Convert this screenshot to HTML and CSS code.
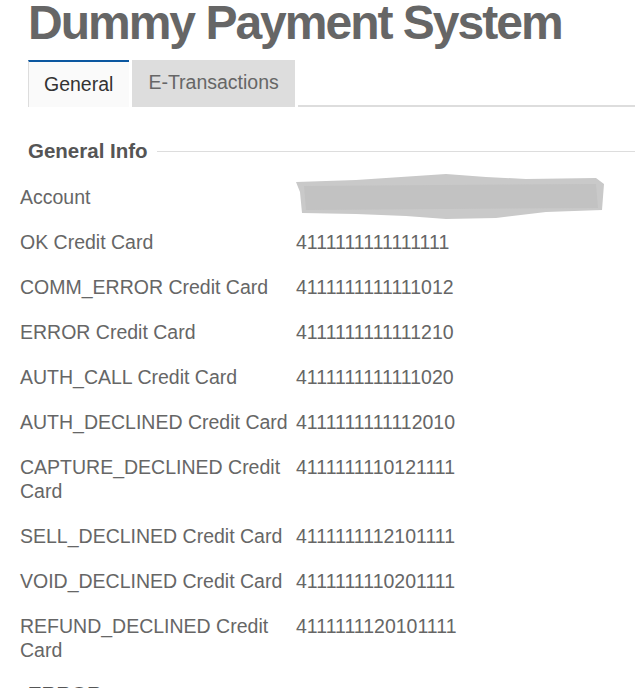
FILE: index.html
```html
<!DOCTYPE html>
<html lang="en">
<head>
<meta charset="UTF-8">
<meta name="viewport" content="width=device-width, initial-scale=1.0">
<title>Dummy Payment System</title>
<link rel="stylesheet" href="styles.css">
</head>
<body>
<div class="page">
  <h1 class="title">Dummy Payment System</h1>

  <div class="tabs">
    <div class="tab active">General</div>
    <div class="tab">E-Transactions</div>
    <div class="tab-rest"></div>
  </div>

  <div class="section">
    <div class="legend"><span>General Info</span><span class="rule"></span></div>
    <div class="info">
      <div class="label">Account</div>
      <div class="value">
        <svg class="redact" width="310" height="50" viewBox="0 0 310 50">
          <path d="M0 10 L60 8 L120 4 L150 2 L190 5 L230 7 L300 6 L308 12 L306 38 L250 40 L200 46 L150 47 L110 44 L60 42 L6 41 L4 20 Z" fill="#c9c9c9"/>
          <path d="M8 14 L300 12 L302 36 L10 38 Z" fill="#c2c2c2"/>
        </svg>
      </div>

      <div class="label">OK Credit Card</div>
      <div class="value">4111111111111111</div>

      <div class="label">COMM_ERROR Credit Card</div>
      <div class="value">4111111111111012</div>

      <div class="label">ERROR Credit Card</div>
      <div class="value">4111111111111210</div>

      <div class="label">AUTH_CALL Credit Card</div>
      <div class="value">4111111111111020</div>

      <div class="label">AUTH_DECLINED Credit Card</div>
      <div class="value">4111111111112010</div>

      <div class="label">CAPTURE_DECLINED Credit Card</div>
      <div class="value">4111111110121111</div>

      <div class="label">SELL_DECLINED Credit Card</div>
      <div class="value">4111111112101111</div>

      <div class="label">VOID_DECLINED Credit Card</div>
      <div class="value">4111111110201111</div>

      <div class="label">REFUND_DECLINED Credit Card</div>
      <div class="value">4111111120101111</div>
    </div>
  </div>

  <div class="section last">
    <div class="legend"><span>ERROR</span><span class="rule"></span></div>
  </div>
</div>
</body>
</html>
```

FILE: styles.css
```css
body {
  font-family: 'Liberation Sans', Arial, sans-serif;
  background: #fff;
  margin: 0;
  color: #666;
}
.page {
  padding: 0 0 0 20px;
}
.title {
  margin: 0 0 0 8px;
  font-size: 48px;
  line-height: 46px;
  font-weight: bold;
  letter-spacing: -2px;
  color: #666;
}
.tabs {
  display: flex;
  margin: 14px 0 0 8px;
  height: 47px;
}
.tab {
  padding: 0 16px;
  font-size: 19.5px;
  line-height: 45px;
  color: #666;
  background: #ddd;
  margin-right: 3px;
}
.tab.active {
  background: #fafafa;
  color: #333;
  border-top: 2px solid #0b57a0;
  border-left: 1px solid #ddd;
  padding: 0 16px 0 15px;
}
.tab-rest {
  flex: 1;
  border-bottom: 2px solid #ddd;
}
.section {
  margin-top: 32px;
}
.section.last {
  margin-top: 9px;
}
.legend {
  display: flex;
  align-items: center;
  gap: 9px;
  margin-left: 8px;
  font-size: 20.5px;
  font-weight: bold;
  color: #555;
  line-height: 24px;
}
.legend .rule {
  flex: 1;
  height: 1px;
  background: #ddd;
}
.info {
  display: grid;
  grid-template-columns: 276px 1fr;
  margin-top: 12px;
}
.label,
.value {
  font-size: 19.5px;
  line-height: 24px;
  padding: 10px 0 11px;
}
.label {
  padding-right: 6px;
}
.value {
  position: relative;
}
.redact {
  position: absolute;
  left: 0;
  top: -3px;
}
```
